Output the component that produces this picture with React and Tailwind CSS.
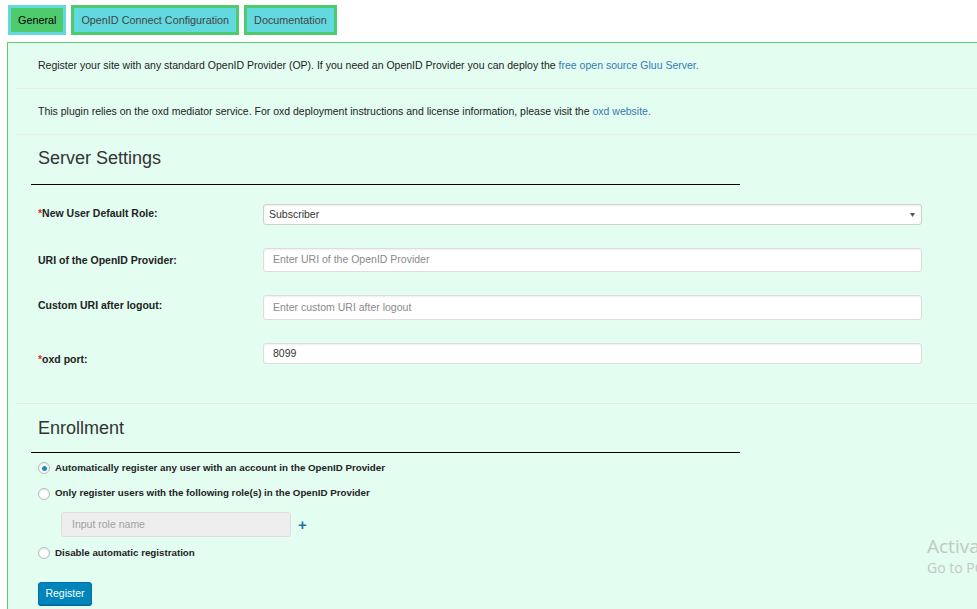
import React from 'react';

function Row({ label, required, children, labelClass = '' }) {
  return (
    <div className="flex items-start">
      <div className={`w-[225px] shrink-0 text-[10.5px] font-bold text-[#222] ${labelClass}`}>
        {required && <span className="text-[#dc3232]">*</span>}
        {label}
      </div>
      <div className="w-[659px]">{children}</div>
    </div>
  );
}

function Radio({ checked, children }) {
  return (
    <label className="flex items-center gap-[5px] text-[9.75px] font-bold text-[#222]">
      <span className="w-[12px] h-[12px] rounded-full border border-[#b4b9be] bg-white shadow-[inset_0_1px_2px_rgba(0,0,0,0.1)] flex items-center justify-center">
        {checked && <span className="w-[5px] h-[5px] rounded-full bg-[#1e8cbe]" />}
      </span>
      {children}
    </label>
  );
}

export default function App() {
  return (
    <div className="min-h-screen bg-white overflow-hidden relative font-['Liberation_Sans',Arial,sans-serif] text-[#222]">
      {/* Tabs */}
      <div className="flex gap-[5px] pl-[8px] pt-[5px]">
        <div className="h-[30px] px-[7px] flex items-center bg-[#4ecb6c] border-[3px] border-[#62d8df] text-[10.8px] text-black">
          General
        </div>
        <div className="h-[30px] px-[7px] flex items-center bg-[#62d8df] border-[3px] border-[#4ecb6c] text-[10.8px] text-[#444]">
          OpenID Connect Configuration
        </div>
        <div className="h-[30px] px-[7px] flex items-center bg-[#62d8df] border-[3px] border-[#4ecb6c] text-[10.8px] text-[#444]">
          Documentation
        </div>
      </div>

      {/* Panel */}
      <div className="ml-[7px] mt-[7px] border border-r-0 border-b-0 border-[#5ccf6d] bg-[#e3fdf0] pl-[8px] min-h-[570px]">
        <div className="h-[45px] flex items-center pl-[22px] text-[10.5px]">
          <p>
            Register your site with any standard OpenID Provider (OP). If you need an OpenID Provider you can deploy the{' '}
            <a className="text-[#337ab7]">free open source Gluu Server.</a>
          </p>
        </div>
        <div className="border-t border-[#e8eeee]" />
        <div className="h-[45px] flex items-center pl-[22px] text-[10.5px]">
          <p>
            This plugin relies on the oxd mediator service. For oxd deployment instructions and license information, please visit the{' '}
            <a className="text-[#337ab7]">oxd website.</a>
          </p>
        </div>
        <div className="border-t border-[#e8eeee]" />

        {/* Server Settings */}
        <div className="pl-[22px] pt-[10px] h-[49px] text-[18px] text-[#333]">Server Settings</div>
        <div className="ml-[15px] w-[709px] border-t border-black" />

        <div className="pl-[22px] pt-[19px] flex flex-col">
          <Row label="New User Default Role:" required labelClass="pt-[2px]">
            <div className="h-[21px] bg-white border border-[#d0d0d0] rounded-[3px] shadow-[inset_0_1px_2px_rgba(0,0,0,0.07)] flex items-center justify-between pl-[5px] pr-[6px] text-[10.5px] text-[#333]">
              <span>Subscriber</span>
              <svg width="5" height="4" viewBox="0 0 5 4"><path d="M0 0h5L2.5 4z" fill="#555" /></svg>
            </div>
          </Row>
          <div className="h-[23px]" />
          <Row label="URI of the OpenID Provider:" labelClass="pt-[5px]">
            <div className="h-[24px] bg-white border border-[#dddddd] rounded-[3px] shadow-[inset_0_1px_2px_rgba(0,0,0,0.07)] flex items-center pl-[9px] text-[10.5px] text-[#8a8a8a]">
              Enter URI of the OpenID Provider
            </div>
          </Row>
          <div className="h-[23px]" />
          <Row label="Custom URI after logout:" labelClass="pt-[3px]">
            <div className="h-[25px] bg-white border border-[#dddddd] rounded-[3px] shadow-[inset_0_1px_2px_rgba(0,0,0,0.07)] flex items-center pl-[9px] text-[10.5px] text-[#8a8a8a]">
              Enter custom URI after logout
            </div>
          </Row>
          <div className="h-[23px]" />
          <Row label="oxd port:" required labelClass="pt-[9px]">
            <div className="h-[21px] bg-white border border-[#dddddd] rounded-[3px] shadow-[inset_0_1px_2px_rgba(0,0,0,0.07)] flex items-center pl-[9px] text-[10.5px] text-[#333]">
              8099
            </div>
          </Row>
        </div>

        <div className="mt-[35px] border-t border-[#e3ebe7]" />

        {/* Enrollment */}
        <div className="pl-[22px] pt-[11px] h-[48px] text-[18px] text-[#333]">Enrollment</div>
        <div className="ml-[15px] w-[709px] border-t border-black" />

        <div className="pl-[22px] pt-[8px] flex flex-col">
          <Radio checked>Automatically register any user with an account in the OpenID Provider</Radio>
          <div className="h-[11px]" />
          <Radio>Only register users with the following role(s) in the OpenID Provider</Radio>
          <div className="flex items-center pl-[23px] mt-[11px]">
            <div className="w-[230px] h-[25px] bg-[#eeeeee] border border-[#dddddd] rounded-[3px] flex items-center pl-[10px] text-[10.5px] text-[#a0a0a0]">
              Input role name
            </div>
            <span className="ml-[7px] text-[#2271b1] text-[15px] font-bold leading-none">+</span>
          </div>
          <div className="h-[9px]" />
          <Radio>Disable automatic registration</Radio>
          <div className="mt-[19px]">
            <button className="h-[23px] w-[54px] bg-[#0085ba] border border-[#0073aa] rounded-[3px] text-white text-[10.5px] shadow-[0_1px_0_#006799]">
              Register
            </button>
          </div>
        </div>
      </div>

      {/* Windows watermark */}
      <div className="absolute left-[927px] top-[535px] whitespace-nowrap text-[#c2c8c5] font-['Open_Sans',sans-serif] leading-tight">
        <div className="text-[19px]">Activate Windows</div>
        <div className="text-[14px]">Go to PC settings to activate Windows.</div>
      </div>
    </div>
  );
}
